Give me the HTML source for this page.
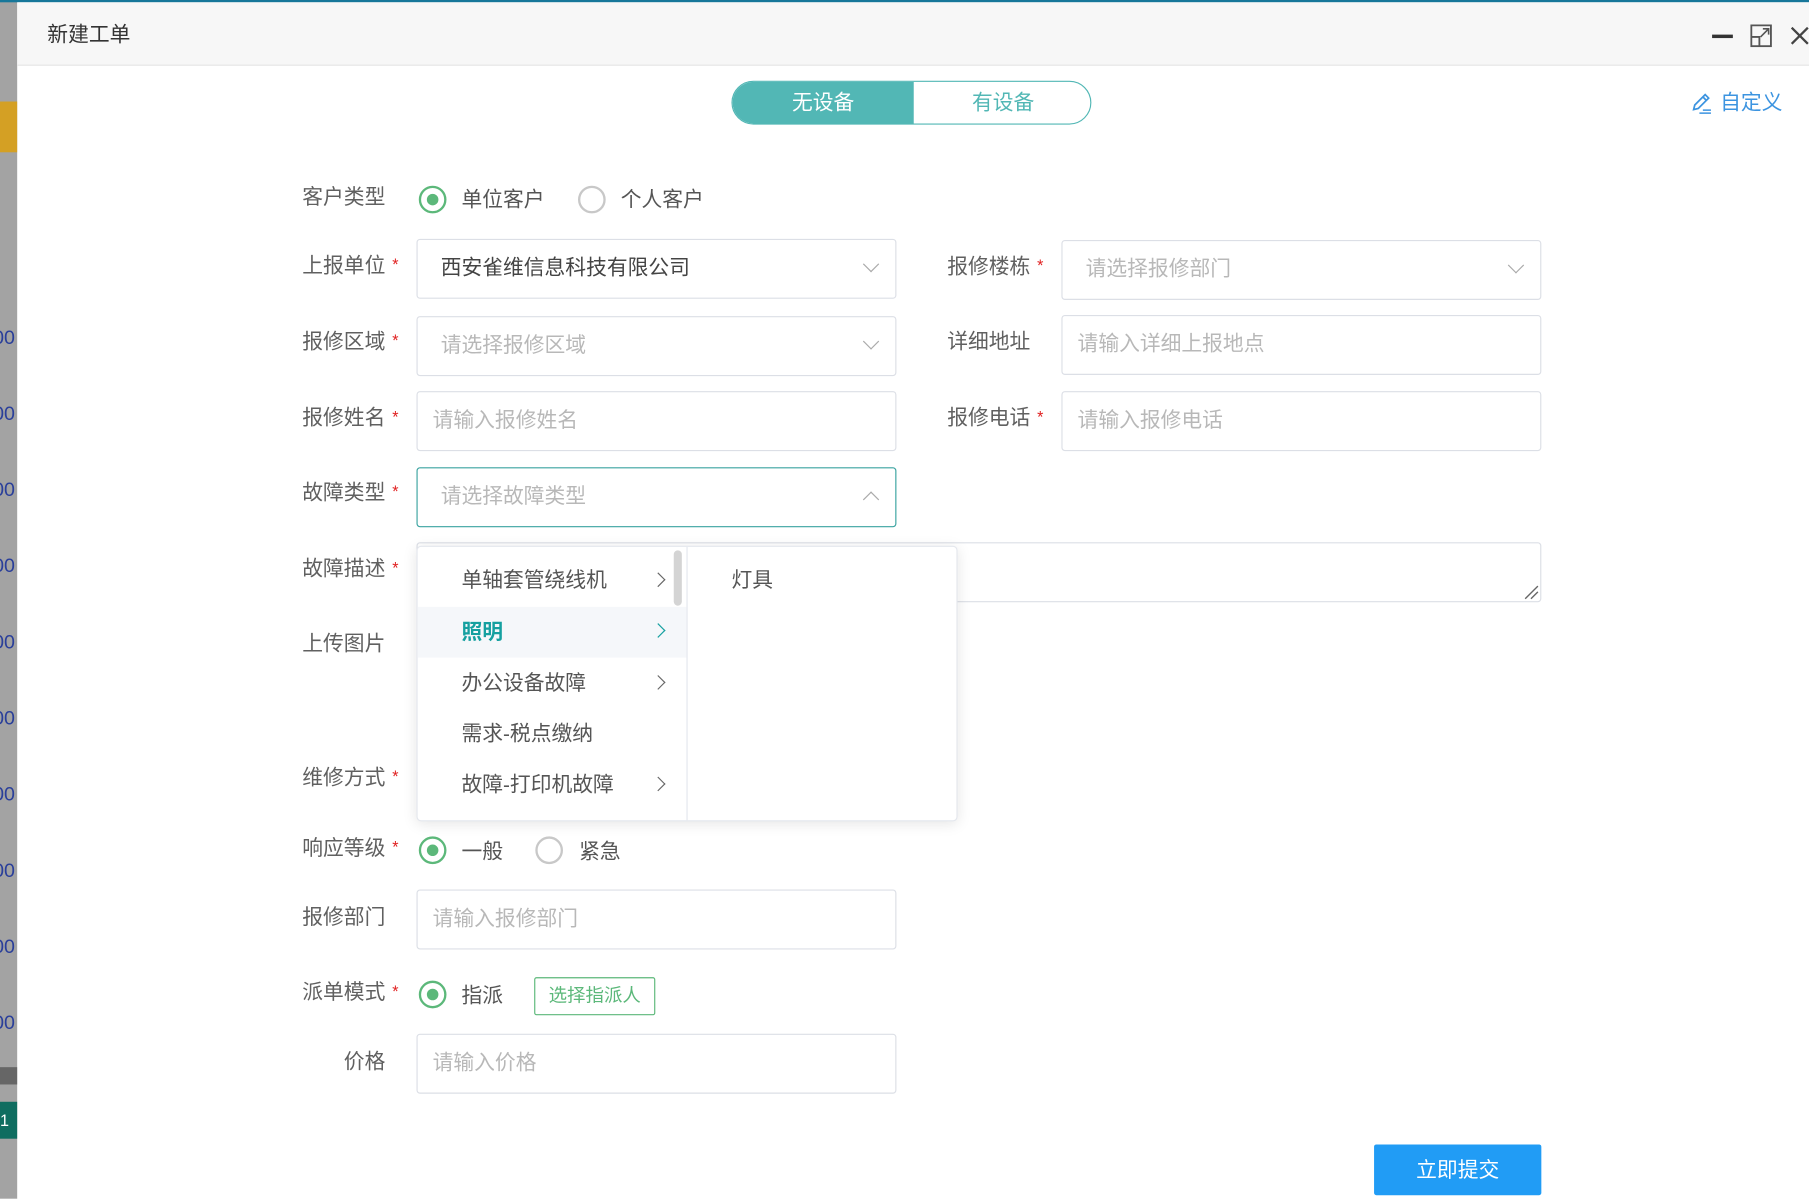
<!DOCTYPE html>
<html><head><meta charset="utf-8"><style>
html,body{margin:0;padding:0;width:1809px;height:1199px;overflow:hidden;background:#fff}
#w{position:absolute;left:0;top:0;width:1568px;height:1039px;transform:scale(1.15370);transform-origin:0 0;font-family:"Liberation Sans","Noto Sans CJK SC",sans-serif;color:#555}
.a{position:absolute}
.lbl{position:absolute;font-size:18px;color:#606060;white-space:nowrap;line-height:24px}
.st{color:#e02020;font-size:14px;position:absolute}
.inp{position:absolute;border:1px solid #dcdfe6;border-radius:3px;height:50px;background:#fff;box-sizing:border-box}
.ph{position:absolute;font-size:18px;color:#b8b8b8;line-height:24px;white-space:nowrap}
.chev{position:absolute;width:9px;height:9px;border-right:1.3px solid #aaa;border-bottom:1.3px solid #aaa;transform:rotate(45deg)}
.radio{position:absolute;width:24px;height:24px;border-radius:50%;box-sizing:border-box;border:2px solid #5cb87a}
.radio.on::after{content:"";position:absolute;left:5px;top:5px;width:10px;height:10px;border-radius:50%;background:#5cb87a}
.radio.off{border-color:#c8c8c8}
.rt{position:absolute;font-size:18px;color:#555;line-height:24px}
.mi{position:absolute;left:400px;font-size:18px;color:#555;line-height:24px;white-space:nowrap}
.ar{position:absolute;left:566px;width:8px;height:8px;border-right:1.3px solid #666;border-top:1.3px solid #666;transform:rotate(45deg)}
</style></head><body><div id="w">
<!-- left background strip -->
<div class="a" style="left:0;top:0;width:15px;height:1039px;background:#a3a3a3"></div>
<div class="a" style="left:0;top:88px;width:15px;height:44px;background:#d4a024"></div>
<div class="a" style="left:0;top:925px;width:15px;height:15px;background:#666"></div>
<div class="a" style="left:0;top:955px;width:15px;height:32px;background:#0f6d60;color:#fff;font-size:14px;line-height:32px">1</div>
<div class="a" style="left:-6px;top:284px;color:#2a3f9a;font-size:17px;line-height:1">00</div>
<div class="a" style="left:-6px;top:350px;color:#2a3f9a;font-size:17px;line-height:1">00</div>
<div class="a" style="left:-6px;top:416px;color:#2a3f9a;font-size:17px;line-height:1">00</div>
<div class="a" style="left:-6px;top:482px;color:#2a3f9a;font-size:17px;line-height:1">00</div>
<div class="a" style="left:-6px;top:548px;color:#2a3f9a;font-size:17px;line-height:1">00</div>
<div class="a" style="left:-6px;top:614px;color:#2a3f9a;font-size:17px;line-height:1">00</div>
<div class="a" style="left:-6px;top:680px;color:#2a3f9a;font-size:17px;line-height:1">00</div>
<div class="a" style="left:-6px;top:746px;color:#2a3f9a;font-size:17px;line-height:1">00</div>
<div class="a" style="left:-6px;top:812px;color:#2a3f9a;font-size:17px;line-height:1">00</div>
<div class="a" style="left:-6px;top:878px;color:#2a3f9a;font-size:17px;line-height:1">00</div>
<!-- modal -->
<div class="a" style="left:15px;top:0;width:1553px;height:1039px;background:#fff"></div>
<div class="a" style="left:0;top:0;width:1568px;height:2px;background:#17779a"></div>
<div class="a" style="left:15px;top:2px;width:1553px;height:54px;background:#f7f7f7;border-bottom:1px solid #e6e6e6"></div>
<div class="a" style="left:41px;top:18px;font-size:18px;color:#333;line-height:24px">新建工单</div>
<div class="a" style="left:1484px;top:30px;width:18px;height:3px;background:#333"></div>
<svg class="a" style="left:1517px;top:21px" width="19" height="20" viewBox="0 0 19 20"><path d="M1 1h17v18H1z M1 11h7v8" fill="none" stroke="#555" stroke-width="1.6"/><path d="M9 11l7-7M11 4h5v5" fill="none" stroke="#555" stroke-width="1.4"/></svg>
<svg class="a" style="left:1551px;top:22px" width="17" height="17" viewBox="0 0 17 17"><path d="M2 2l14 14M16 2L2 16" stroke="#444" stroke-width="2"/></svg>
<!-- toggle -->
<div class="a" style="left:634px;top:70px;width:312px;height:38px;border:1px solid #52b7b5;border-radius:20px;box-sizing:border-box;overflow:hidden">
<div class="a" style="left:0;top:0;width:157px;height:38px;background:#52b7b5;color:#fff;font-size:18px;line-height:37px;text-align:center">无设备</div>
<div class="a" style="left:157px;top:0;width:155px;height:38px;color:#52b7b5;font-size:18px;line-height:37px;text-align:center">有设备</div>
</div>
<svg class="a" style="left:1465px;top:80px" width="20" height="20" viewBox="0 0 20 20"><path d="M3 15l1-4 9-9 3 3-9 9z M11 4l3 3" fill="none" stroke="#3c94e0" stroke-width="1.5"/><path d="M8 18h10M11 15.5h7" stroke="#3c94e0" stroke-width="1.3"/></svg>
<div class="a" style="left:1491px;top:77px;font-size:18px;color:#3c94e0;line-height:24px">自定义</div>
<!-- row customer type -->
<div class="lbl" style="left:262px;top:159px">客户类型</div>
<div class="radio on" style="left:363px;top:161px"></div><div class="rt" style="left:400px;top:161px">单位客户</div>
<div class="radio off" style="left:501px;top:161px"></div><div class="rt" style="left:538px;top:161px">个人客户</div>
<!-- rows -->
<div class="lbl" style="left:262px;top:218px">上报单位</div><div class="st" style="left:340px;top:221px">*</div>
<div class="inp" style="left:361px;top:207px;width:416px;height:52px"></div><div class="rt" style="left:382px;top:220px;color:#444">西安雀维信息科技有限公司</div><div class="chev" style="left:750px;top:224px"></div>
<div class="lbl" style="left:821px;top:219px">报修楼栋</div><div class="st" style="left:899px;top:222px">*</div>
<div class="inp" style="left:920px;top:208px;width:416px;height:52px"></div><div class="ph" style="left:941px;top:221px">请选择报修部门</div><div class="chev" style="left:1309px;top:225px"></div>

<div class="lbl" style="left:262px;top:284px">报修区域</div><div class="st" style="left:340px;top:287px">*</div>
<div class="inp" style="left:361px;top:274px;width:416px;height:52px"></div><div class="ph" style="left:382px;top:287px">请选择报修区域</div><div class="chev" style="left:750px;top:291px"></div>
<div class="lbl" style="left:821px;top:284px">详细地址</div>
<div class="inp" style="left:920px;top:273px;width:416px;height:52px"></div><div class="ph" style="left:934px;top:286px">请输入详细上报地点</div>

<div class="lbl" style="left:262px;top:350px">报修姓名</div><div class="st" style="left:340px;top:353px">*</div>
<div class="inp" style="left:361px;top:339px;width:416px;height:52px"></div><div class="ph" style="left:375px;top:352px">请输入报修姓名</div>
<div class="lbl" style="left:821px;top:350px">报修电话</div><div class="st" style="left:899px;top:353px">*</div>
<div class="inp" style="left:920px;top:339px;width:416px;height:52px"></div><div class="ph" style="left:934px;top:352px">请输入报修电话</div>

<div class="lbl" style="left:262px;top:415px">故障类型</div><div class="st" style="left:340px;top:418px">*</div>
<div class="inp" style="left:361px;top:405px;width:416px;height:52px;border-color:#3aa3a0"></div><div class="ph" style="left:382px;top:418px">请选择故障类型</div>
<div class="a" style="left:750px;top:428px;width:9px;height:9px;border-left:1.3px solid #aaa;border-top:1.3px solid #aaa;transform:rotate(45deg)"></div>

<div class="lbl" style="left:262px;top:481px">故障描述</div><div class="st" style="left:340px;top:484px">*</div>
<div class="inp" style="left:361px;top:470px;width:975px;height:52px"></div>
<svg class="a" style="left:1320px;top:507px" width="14" height="13"><path d="M2 12L13 1M7 12l6-6" stroke="#666" stroke-width="1.2"/></svg>

<div class="lbl" style="left:262px;top:546px">上传图片</div>
<div class="lbl" style="left:262px;top:662px">维修方式</div><div class="st" style="left:340px;top:665px">*</div>

<div class="lbl" style="left:262px;top:723px">响应等级</div><div class="st" style="left:340px;top:726px">*</div>
<div class="radio on" style="left:363px;top:725px"></div><div class="rt" style="left:400px;top:726px">一般</div>
<div class="radio off" style="left:464px;top:725px"></div><div class="rt" style="left:502px;top:726px">紧急</div>

<div class="lbl" style="left:262px;top:783px">报修部门</div>
<div class="inp" style="left:361px;top:771px;width:416px;height:52px"></div><div class="ph" style="left:375px;top:784px">请输入报修部门</div>

<div class="lbl" style="left:262px;top:848px">派单模式</div><div class="st" style="left:340px;top:851px">*</div>
<div class="radio on" style="left:363px;top:850px"></div><div class="rt" style="left:400px;top:851px">指派</div>
<div class="a" style="left:463px;top:847px;width:105px;height:33px;border:1px solid #5cb87a;border-radius:2px;box-sizing:border-box;color:#5cb87a;font-size:16px;line-height:31px;text-align:center">选择指派人</div>

<div class="lbl" style="left:298px;top:908px">价格</div>
<div class="inp" style="left:361px;top:896px;width:416px;height:52px"></div><div class="ph" style="left:375px;top:909px">请输入价格</div>

<div class="a" style="left:1191px;top:992px;width:145px;height:44px;background:#219cf5;border-radius:2px;color:#fff;font-size:18px;line-height:44px;text-align:center">立即提交</div>

<!-- dropdown -->
<div class="a" style="left:361px;top:473px;width:469px;height:239px;background:#fff;border:1px solid #e4e7ed;border-radius:4px;box-shadow:0 2px 12px rgba(0,0,0,0.1);box-sizing:border-box;overflow:hidden">
<div class="a" style="left:233px;top:0;width:1px;height:239px;background:#e4e7ed"></div>
<div class="a" style="left:0;top:52px;width:233px;height:44px;background:#f5f7fa"></div>
<div class="a" style="left:222px;top:3px;width:7px;height:48px;border-radius:4px;background:#d4d4d4"></div>
</div>
<div class="mi" style="top:491px">单轴套管绕线机</div><div class="ar" style="top:498px"></div>
<div class="mi" style="top:536px;color:#15a0a0;font-weight:bold">照明</div><div class="ar" style="top:542px;border-color:#15a0a0"></div>
<div class="mi" style="top:580px">办公设备故障</div><div class="ar" style="top:587px"></div>
<div class="mi" style="top:624px">需求-税点缴纳</div>
<div class="mi" style="top:668px">故障-打印机故障</div><div class="ar" style="top:675px"></div>
<div class="mi" style="left:634px;top:491px">灯具</div>
</div></body></html>
